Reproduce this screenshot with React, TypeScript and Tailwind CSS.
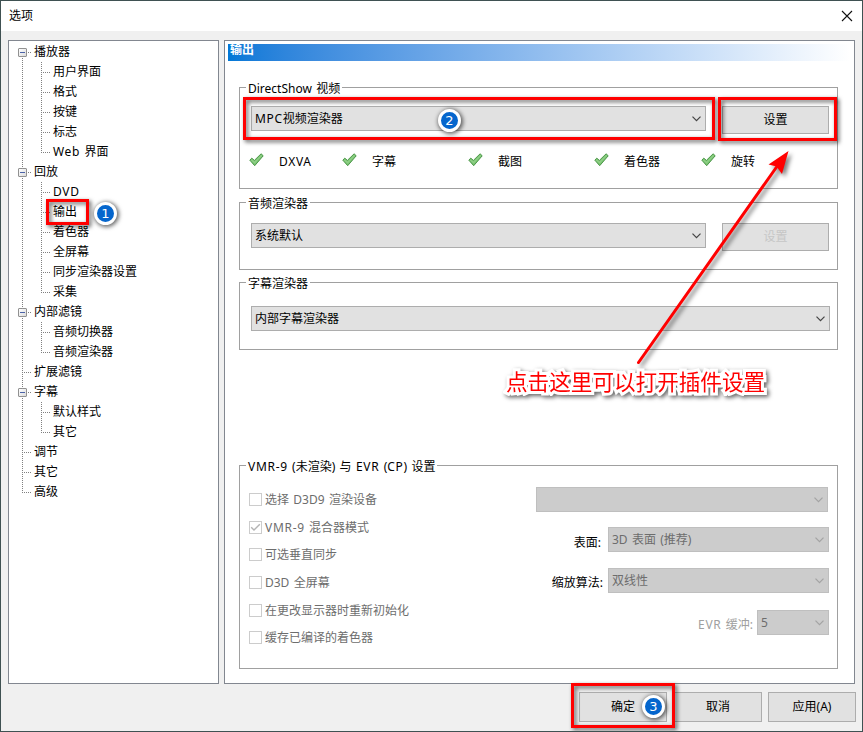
import React from "react";

type Node = { label: string; depth: 0 | 1; open?: boolean; last?: boolean };

const nodes: Node[] = [
  { label: "播放器", depth: 0, open: true },
  { label: "用户界面", depth: 1 },
  { label: "格式", depth: 1 },
  { label: "按键", depth: 1 },
  { label: "标志", depth: 1 },
  { label: "Web 界面", depth: 1, last: true },
  { label: "回放", depth: 0, open: true },
  { label: "DVD", depth: 1 },
  { label: "输出", depth: 1 },
  { label: "着色器", depth: 1 },
  { label: "全屏幕", depth: 1 },
  { label: "同步渲染器设置", depth: 1 },
  { label: "采集", depth: 1, last: true },
  { label: "内部滤镜", depth: 0, open: true },
  { label: "音频切换器", depth: 1 },
  { label: "音频渲染器", depth: 1, last: true },
  { label: "扩展滤镜", depth: 0 },
  { label: "字幕", depth: 0, open: true },
  { label: "默认样式", depth: 1 },
  { label: "其它", depth: 1, last: true },
  { label: "调节", depth: 0 },
  { label: "其它", depth: 0 },
  { label: "高级", depth: 0, last: true },
];

/* Acronyms are set slightly looser than the surrounding text. */
function Label({ text }: { text: string }) {
  return (
    <>
      {text.split(/(Web|[A-Z]{2,}(?:-9)?)/).map((part, i) =>
        i % 2 ? (
          <span key={i} className="tracking-[0.7px]">{part}</span>
        ) : (
          part
        )
      )}
    </>
  );
}

function VLine({ half = "full" }: { half?: "full" | "top" | "bottom" }) {
  const size = half === "full" ? "h-5" : half === "top" ? "h-[11px]" : "mt-[10px] h-[10px]";
  return (
    <div className={`w-px shrink-0 self-start bg-[repeating-linear-gradient(to_bottom,#808080_0_1px,transparent_1px_2px)] ${size}`} />
  );
}

function HLine({ width }: { width: string }) {
  return (
    <div className={`h-px shrink-0 self-start mt-[10px] bg-[repeating-linear-gradient(to_right,transparent_0_1px,#808080_1px_2px)] ${width}`} />
  );
}

function TreeRow({ node, first }: { node: Node; first: boolean }) {
  const rootHalf = first ? "bottom" : node.depth === 0 && node.last ? "top" : "full";
  return (
    <div className="flex h-5 items-center pl-[9px]">
      <div className="relative flex h-5 w-[9px] justify-center">
        <VLine half={rootHalf} />
        {node.open && (
          <div className="absolute left-0 top-[6px] flex h-[9px] w-[9px] items-center justify-center rounded-[1px] border border-[#919191] bg-linear-to-br from-white to-[#dcdcdc]">
            <div className="h-px w-[5px] bg-[#4b63a7]" />
          </div>
        )}
      </div>
      {node.depth === 0 ? (
        <>
          {!node.open && <div className="-ml-1 flex self-start"><HLine width="w-[8px]" /></div>}
          {node.open && <HLine width="w-[4px]" />}
          <span className="ml-[3px] leading-5">{node.label}</span>
        </>
      ) : (
        <>
          <div className="w-[14px]" />
          <VLine half={node.last ? "top" : "full"} />
          <HLine width="w-[8px]" />
          <span className="ml-[3px] leading-5"><Label text={node.label} /></span>
        </>
      )}
    </div>
  );
}

function Chevron({ color }: { color: string }) {
  return (
    <svg width="9" height="6" viewBox="0 0 9 6" fill="none" stroke={color} strokeWidth="1.2">
      <path d="M0.5 0.7 4.5 4.7 8.5 0.7" />
    </svg>
  );
}

function Combo({ text, className, disabled }: { text: string; className: string; disabled?: boolean }) {
  return (
    <div
      className={`flex h-[25px] items-center justify-between border pl-[3px] pr-[4px] ${
        disabled ? "border-[#bfbfbf] bg-[#ccc] text-[#6d6d6d]" : "border-[#adadad] bg-[#e1e1e1]"
      } ${className}`}
    >
      <span className="leading-[23px]"><Label text={text} /></span>
      <Chevron color={disabled ? "#a3a3a3" : "#444"} />
    </div>
  );
}

function Button({ text, className }: { text: string; className: string }) {
  return (
    <button className={`flex items-center justify-center border border-[#adadad] bg-[#e1e1e1] ${className}`}>{text}</button>
  );
}

function Group({ title, className, children }: { title: string; className: string; children: React.ReactNode }) {
  return (
    <section className={`flex w-[599px] flex-col border border-[#a0a0a0] ${className}`}>
      <h2 className="-mt-[7px] ml-[6px] h-4 self-start bg-white px-[2px] leading-4"><Label text={title} /></h2>
      {children}
    </section>
  );
}

function Tick() {
  return (
    <svg className="mb-[3px] shrink-0" width="15" height="14" viewBox="0 0 15 14">
      <path d="M0.8 7.1 2.8 5.2 5.4 7.4 12.1 0.8 14.2 2.8 5.7 12.7Z" fill="#7cc474" stroke="#4a9647" strokeWidth="1" strokeLinejoin="round" />
      <path d="M2.4 6.9 5.6 9.6 12.6 2.4" fill="none" stroke="#8fd086" strokeWidth="1.3" />
    </svg>
  );
}

function Feature({ label, width }: { label: string; width: string }) {
  return (
    <div className={`flex items-center gap-[15px] ${width}`}>
      <Tick />
      <span className="pt-[2px]"><Label text={label} /></span>
    </div>
  );
}

function Check({ label, checked, className }: { label: string; checked?: boolean; className: string }) {
  return (
    <div className={`flex items-center gap-[3px] text-[#6d6d6d] ${className}`}>
      <span className="flex h-[13px] w-[13px] items-center justify-center border border-[#ccc] bg-white">
        {checked && (
          <svg width="11" height="11" viewBox="0 0 11 11" fill="none" stroke="#b4b4b4" strokeWidth="1.4">
            <path d="M1.2 5.2 4 8 9.8 2.2" />
          </svg>
        )}
      </span>
      <span className="leading-[13px]"><Label text={label} /></span>
    </div>
  );
}

function Frame({ className }: { className: string }) {
  return <div className={`pointer-events-none absolute border-[3px] border-[#f00] drop-shadow-[2px_2px_2px_rgba(0,0,0,0.65)] ${className}`} />;
}

function Badge({ n, className }: { n: number; className: string }) {
  return (
    <div
      className={`absolute flex h-[23px] w-[23px] items-center justify-center rounded-full border-[3px] border-white bg-[#0566cd] font-['DejaVu_Sans',sans-serif] text-[13px] leading-none text-white shadow-[1px_1px_4px_1px_rgba(0,0,0,0.6)] ${className}`}
    >
      {n}
    </div>
  );
}

export default function App() {
  return (
    <div className="relative flex h-[732px] w-[863px] flex-col overflow-hidden border border-[#3f5152] bg-[#f0f0f0] font-['Noto_Sans','Noto_Sans_CJK_SC',sans-serif] text-[12px] text-black [word-spacing:1.2px]">
      <header className="flex h-[30px] shrink-0 items-center justify-between bg-white pl-2 pr-[9px]">
        <span>选项</span>
        <svg width="12" height="12" viewBox="0 0 12 12" fill="none" stroke="#111" strokeWidth="1.1">
          <path d="M1 1 11 11M11 1 1 11" />
        </svg>
      </header>

      <div className="mt-[9px] flex h-[644px] shrink-0 gap-[5px] pl-[7px]">
        <nav className="w-[211px] border border-[#828790] bg-white pt-px">
          {nodes.map((node, i) => (
            <TreeRow key={i} node={node} first={i === 0} />
          ))}
        </nav>

        <main className="flex w-[631px] flex-col border border-[#828790] bg-white pt-[3px]">
          <h1 className="ml-[3px] h-[17px] w-[622px] bg-linear-to-r from-[#0078d7] to-white pl-[2px] font-bold leading-[11px] text-white">输出</h1>
          <div className="flex flex-col pl-[14px]">
            <Group title="DirectShow 视频" className="mt-[26px] h-[102px]">
              <div className="mt-[9px] flex pl-[11px]">
                <Combo text="MPC视频渲染器" className="w-[455px]" />
                <Button text="设置" className="ml-4 h-[28px] w-[107px]" />
              </div>
              <div className="mt-[17px] flex h-5 pl-[9px]">
                <Feature label="DXVA" width="w-[93px]" />
                <Feature label="字幕" width="w-[126px]" />
                <Feature label="截图" width="w-[126px]" />
                <Feature label="着色器" width="w-[107px]" />
                <Feature label="旋转" width="w-[90px]" />
              </div>
            </Group>
            <Group title="音频渲染器" className="mt-[13px] h-[68px]">
              <div className="mt-[11px] flex pl-[11px]">
                <Combo text="系统默认" className="w-[455px]" />
                <Button text="设置" className="ml-4 h-[28px] w-[107px] text-[#c6c6c6]" />
              </div>
            </Group>
            <Group title="字幕渲染器" className="mt-[12px] h-[68px]">
              <div className="mt-[14px] flex pl-[11px]">
                <Combo text="内部字幕渲染器" className="w-[579px]" />
              </div>
            </Group>
            <Group title="VMR-9 (未渲染) 与 EVR (CP) 设置" className="mt-[115px] h-[204px]">
              <div className="flex justify-between pl-[9px] pr-2">
                <div className="flex flex-col pt-[18px]">
                  <Check label="选择 D3D9 渲染设备" className="h-[13px]" />
                  <Check label="VMR-9 混合器模式" checked className="mt-[15px] h-[13px]" />
                  <Check label="可选垂直同步" className="mt-[14px] h-[13px]" />
                  <Check label="D3D 全屏幕" className="mt-[15px] h-[13px]" />
                  <Check label="在更改显示器时重新初始化" className="mt-[15px] h-[13px]" />
                  <Check label="缓存已编译的着色器" className="mt-[14px] h-[13px]" />
                </div>
                <div className="flex flex-col items-end pt-[12px]">
                  <Combo text="" disabled className="mr-px w-[292px]" />
                  <div className="mt-[15px] flex h-[25px]">
                    <span className="mr-[7px] pt-[7px]">表面:</span>
                    <Combo text="3D 表面 (推荐)" disabled className="w-[221px]" />
                  </div>
                  <div className="mt-[16px] flex h-[25px]">
                    <span className="mr-[5px] pt-[6px]">缩放算法:</span>
                    <Combo text="双线性" disabled className="w-[221px]" />
                  </div>
                  <div className="mt-[17px] flex h-[25px]">
                    <span className="mr-[4px] pt-[6px] text-[#a0a0a0]"><Label text="EVR 缓冲:" /></span>
                    <Combo text="5" disabled className="w-[72px]" />
                  </div>
                </div>
              </div>
            </Group>
          </div>
        </main>
      </div>

      <footer className="mt-2 flex justify-end gap-[6px] pr-[6px]">
        <Button text="确定" className="mr-px h-[30px] w-[88px]" />
        <Button text="取消" className="h-[30px] w-[88px]" />
        <Button text="应用(A)" className="h-[30px] w-[88px]" />
      </footer>

      <Frame className="left-[45px] top-[198px] h-[26px] w-[43px]" />
      <Frame className="left-[242px] top-[96px] h-[43px] w-[472px]" />
      <Frame className="left-[717px] top-[96px] h-[44px] w-[119px]" />
      <Frame className="left-[570px] top-[682px] h-[45px] w-[104px]" />
      <Badge n={1} className="left-[93px] top-[201px]" />
      <Badge n={2} className="left-[437px] top-[108px]" />
      <Badge n={3} className="left-[641px] top-[694px]" />

      <svg className="pointer-events-none absolute left-[619px] top-[139px] drop-shadow-[3px_3px_2px_rgba(0,0,0,0.5)]" width="190" height="240" viewBox="620 140 190 240">
        <path d="M638.5 362.5 778 165" stroke="#f00" strokeWidth="3" strokeLinecap="round" />
        <path d="M788.5 151 768.5 164.5 776.5 166.5 782 174Z" fill="#f00" />
      </svg>
      <div className="absolute left-[505px] top-[365px] whitespace-nowrap text-[21.6px] leading-8 text-[#f00] drop-shadow-[2px_2px_2px_rgba(0,0,0,0.6)] [-webkit-text-stroke:6px_white] [paint-order:stroke_fill] [stroke-linejoin:round]">
        点击这里可以打开插件设置
      </div>
    </div>
  );
}
